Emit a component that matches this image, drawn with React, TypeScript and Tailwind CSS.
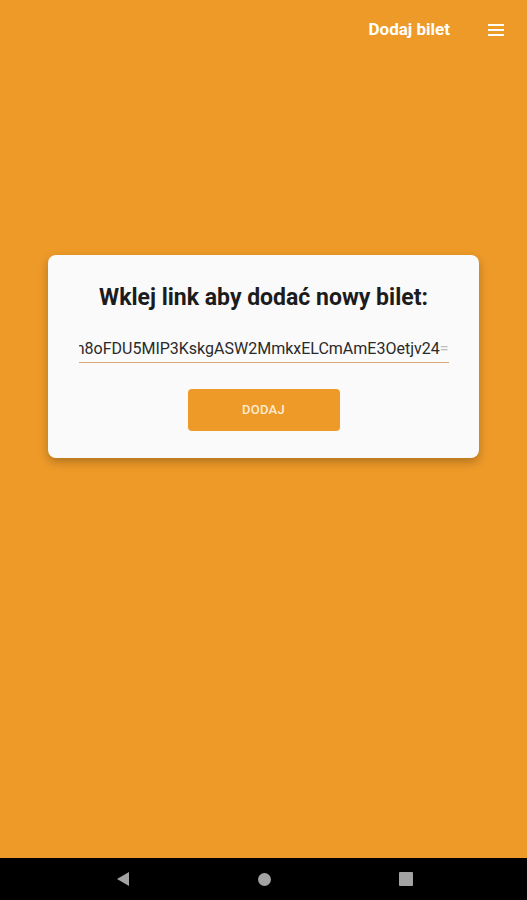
import { useState } from "react";

const LINK = "Zn8oFDU5MIP3KskgASW2MmkxELCmAmE3Oetjv24=";

function NavBar() {
  return (
    <div className="flex h-[42px] items-center justify-center gap-[128px] bg-black pl-[2px]">
      <svg width="14" height="16" viewBox="0 0 14 16">
        <path d="M13 1 L1 8 L13 15 Z" fill="#a3a3a3" />
      </svg>
      <div className="h-[13px] w-[13px] rounded-full bg-[#a3a3a3]" />
      <div className="h-[14px] w-[14px] rounded-[1px] bg-[#a3a3a3]" />
    </div>
  );
}

export default function App() {
  const [link] = useState(LINK);

  return (
    <div className="flex h-[900px] w-[527px] flex-col bg-[#ed9a28] font-['Roboto',sans-serif]">
      <header className="flex h-[60px] items-center justify-end">
        <span className="text-[17px] font-bold text-white">Dodaj bilet</span>
        <button className="ml-[38px] mr-[23px] flex flex-col gap-[3px]">
          <span className="block h-[2px] w-[16px] bg-white" />
          <span className="block h-[2px] w-[16px] bg-white" />
          <span className="block h-[2px] w-[16px] bg-white" />
        </button>
      </header>

      <main className="flex-1">
        <div className="mx-[48px] mt-[195px] flex h-[203px] flex-col items-center rounded-[8px] bg-[#fafafa] pt-[28px] shadow-[0_4px_10px_rgba(0,0,0,0.25)]">
          <h1 className="text-[23px] font-bold leading-[30px] text-[#1c1c1c]">
            Wklej link aby dodać nowy bilet:
          </h1>
          <div className="mt-[26px] w-[370px] border-b border-[#d9a878] pb-[3px]">
            <div className="flex justify-end overflow-hidden whitespace-nowrap text-[16px] leading-[20px] text-[#2a2a2a]">
              <span>{link.slice(0, -1)}</span>
              <span className="text-[#bdbdbd]">{link.slice(-1)}</span>
            </div>
          </div>
          <button className="mt-[26px] h-[42px] w-[152px] rounded-[4px] bg-[#ed9a28] text-[13px] font-medium tracking-[0.3px] text-[#fdebd3]">
            DODAJ
          </button>
        </div>
      </main>

      <NavBar />
    </div>
  );
}
